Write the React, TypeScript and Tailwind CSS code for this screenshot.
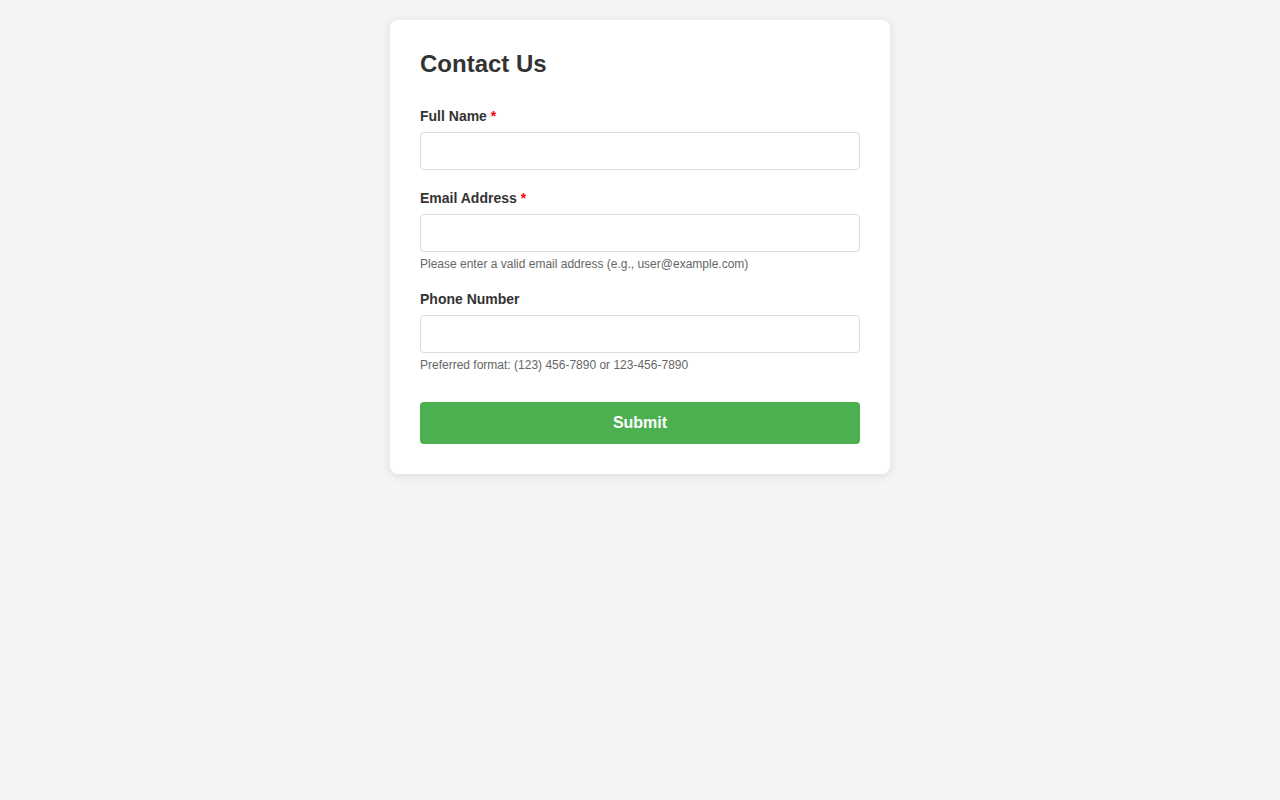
import React from "react";

const fields = [
  { id: "name", label: "Full Name", required: true, type: "text", help: "" },
  { id: "email", label: "Email Address", required: true, type: "email", help: "Please enter a valid email address (e.g., user@example.com)" },
  { id: "phone", label: "Phone Number", required: false, type: "tel", help: "Preferred format: (123) 456-7890 or 123-456-7890" },
];

export default function App() {
  return (
    <div className="min-h-screen bg-[#f4f4f4] px-5 py-5 font-['Liberation_Sans',Arial,sans-serif] text-[#333]">
      <div className="mx-auto w-[500px] rounded-lg bg-white p-[30px] shadow-[0_2px_10px_rgba(0,0,0,0.1)]">
        <h2 className="mb-[30px] text-2xl leading-[28px] font-bold">Contact Us</h2>
        <form onSubmit={(e) => e.preventDefault()}>
          {fields.map((f) => (
            <div key={f.id} className="mb-5">
              <label htmlFor={f.id} className="mb-2 block text-sm leading-4 font-bold">
                {f.label}
                {f.required && <span className="text-[#ff0000]"> *</span>}
              </label>
              <input id={f.id} type={f.type} className="block h-[38px] w-full rounded border border-[#ddd] px-2.5 text-base outline-none" />
              {f.help && <p className="mt-[5px] text-xs leading-[14px] text-[#666]">{f.help}</p>}
            </div>
          ))}
          <button type="submit" className="mt-2.5 h-[42px] w-full rounded bg-[#4caf50] text-base font-bold text-white">
            Submit
          </button>
        </form>
      </div>
    </div>
  );
}
